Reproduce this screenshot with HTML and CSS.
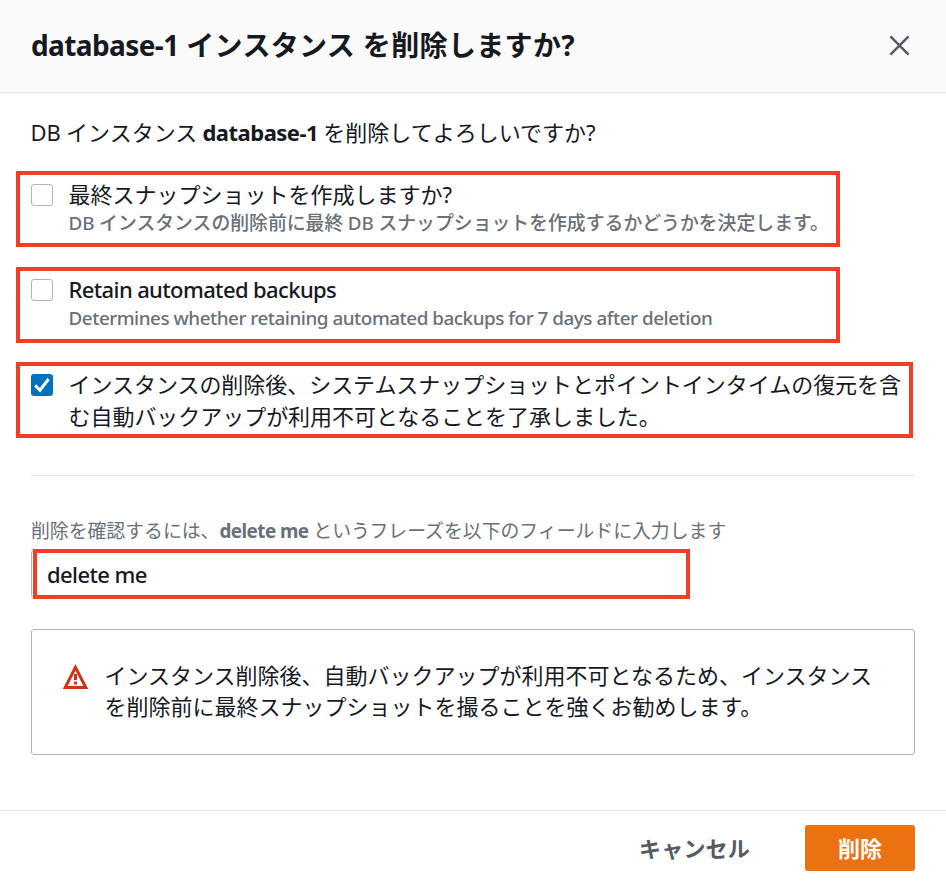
FILE: index.html
```html
<!DOCTYPE html>
<html lang="ja">
<head>
<meta charset="utf-8">
<title>database-1 インスタンス を削除しますか?</title>
<link rel="stylesheet" href="styles.css">
</head>
<body>
<div class="modal">
  <header class="header">
    <h1 class="title"><span class="latin">database-1</span> インスタンス を削除しますか<span class="mark">?</span></h1>
    <svg class="close" viewBox="0 0 22 22" aria-hidden="true"><path d="M1.5 1.5 20.5 20.5M20.5 1.5 1.5 20.5"/></svg>
  </header>
  <main class="content">
    <p class="question">DB インスタンス <b class="latin">database-1</b> を削除してよろしいですか<span class="mark">?</span></p>
    <div class="options">
      <label class="option">
        <span class="box"></span>
        <span class="text"><span class="label">最終スナップショットを作成しますか<span class="mark">?</span></span><span class="hint snapshot">DB インスタンスの削除前に最終 DB スナップショットを作成するかどうかを決定します。</span></span>
      </label>
      <label class="option backups">
        <span class="box"></span>
        <span class="text"><span class="label retain">Retain automated backups</span><span class="hint days">Determines whether retaining automated backups for 7 days after deletion</span></span>
      </label>
      <label class="option acknowledge">
        <span class="box checked"><svg viewBox="0 0 22 22" aria-hidden="true"><path d="M4.2 11.4 9 16.2 17.6 5"/></svg></span>
        <span class="text">インスタンスの削除後、システムスナップショットとポイントインタイムの復元を含<br>む自動バックアップが利用不可となることを了承しました。</span>
      </label>
    </div>
    <hr class="divider">
    <p class="confirm">削除を確認するには、<b class="phrase">delete me</b> というフレーズを以下のフィールドに入力します</p>
    <div class="field"><div class="highlight">delete me</div></div>
    <div class="alert">
      <svg class="warning" viewBox="0 0 26 26" aria-hidden="true"><path class="triangle" d="M12.5 3.4 22.8 23.5H2.2Z"/><path class="bang" d="M12.5 10v6M12.5 17.6v3"/></svg>
      <p class="message">インスタンス削除後、自動バックアップが利用不可となるため、インスタンス<br>を削除前に最終スナップショットを撮ることを強くお勧めします。</p>
    </div>
  </main>
  <footer class="footer">
    <span class="cancel">キャンセル</span>
    <span class="delete">削除</span>
  </footer>
</div>
</body>
</html>
```
FILE: styles.css
```css
* { box-sizing: border-box; }
body {
  margin: 0;
  background: #fff;
  color: #16191f;
  font-family: "Noto Sans", "Noto Sans CJK JP", sans-serif;
  font-size: 22px;
  line-height: 32px;
}
h1, p { margin: 0; white-space: nowrap; }
.modal { height: 886px; display: flex; flex-direction: column; }
.header {
  height: 93px;
  padding: 0 36px 2px 31px;
  display: flex;
  align-items: center;
  justify-content: space-between;
  background: #fafafa;
  border-bottom: 1px solid #e6e9e9;
}
.title { font-size: 28px; line-height: 36px; font-weight: 700; letter-spacing: .35px; }
.title .latin { letter-spacing: -.6px; }
.close { width: 21px; height: 21px; fill: none; stroke: #545b64; stroke-width: 2.6; }
.content { flex: 1; padding: 23px 31px 0; }
.question { margin-left: -.5px; word-spacing: -.5px; }
.question .latin { letter-spacing: -.5px; }
.options {
  margin: 23px 0 0 -15px;
  display: flex;
  flex-direction: column;
  gap: 20px;
}
.option {
  width: 824px;
  height: 76px;
  padding: 5px 0 0 11px;
  border: 4px solid #ee4028;
  display: flex;
  gap: 15.5px;
  white-space: nowrap;
}
.option.backups { padding-top: 4px; }
.option.acknowledge { width: 897px; margin-top: -1px; padding-top: 4px; }
.box {
  flex: none;
  width: 22px;
  height: 22px;
  margin-top: 4px;
  border: 1px solid #aab7b8;
  border-radius: 3px;
  background: #fff;
}
.box.checked { border: 0; background: #0073bb; }
.box svg { display: block; width: 22px; height: 22px; fill: none; stroke: #fff; stroke-width: 3; }
.option .text { flex: none; margin-top: -1px; }
.option.acknowledge .text { margin-top: -2px; letter-spacing: -.04px; }
.label, .hint { display: block; }
.label { line-height: 31px; }
.retain { font-weight: 500; letter-spacing: -.62px; }
.hint { margin-top: 1px; font-size: 18.85px; line-height: 25px; font-weight: 500; color: #687078; }
.snapshot { word-spacing: -.4px; }
.days { letter-spacing: -.47px; }
.divider { height: 1px; margin: 37px 0 0; border: 0; background: #e6e9e9; }
.confirm { margin-top: 42px; font-size: 18.85px; line-height: 26px; color: #687078; }
.confirm .phrase { letter-spacing: -.55px; }
.field {
  width: 658px;
  height: 48px;
  margin-top: 6px;
  border: 1px solid #aab7b8;
  border-radius: 3px;
}
.highlight {
  width: 657px;
  height: 50px;
  margin: -2px 0 0 1px;
  padding-left: 10px;
  border: 4px solid #ee4028;
  font-weight: 500;
  letter-spacing: -.6px;
  line-height: 42px;
}
.alert {
  height: 126px;
  margin-top: 31px;
  padding: 30px 31px 0;
  border: 1px solid #aab7b8;
  border-radius: 3px;
  display: flex;
  gap: 15.5px;
}
.warning { flex: none; width: 26px; height: 26px; margin-top: 3.5px; fill: none; stroke: #d13212; }
.triangle { stroke-width: 3; }
.bang { stroke-width: 3; }
.message { line-height: 31px; }
.footer {
  height: 76px;
  padding: 0 31px 2px;
  display: flex;
  align-items: center;
  justify-content: flex-end;
  gap: 55px;
  border-top: 1px solid #e6e9e9;
  font-weight: 700;
}
.cancel { color: #545b64; letter-spacing: .2px; }
.delete {
  width: 110px;
  height: 46px;
  border-radius: 3px;
  background: #ec7211;
  color: #fff;
  text-align: center;
  line-height: 46px;
}
```
